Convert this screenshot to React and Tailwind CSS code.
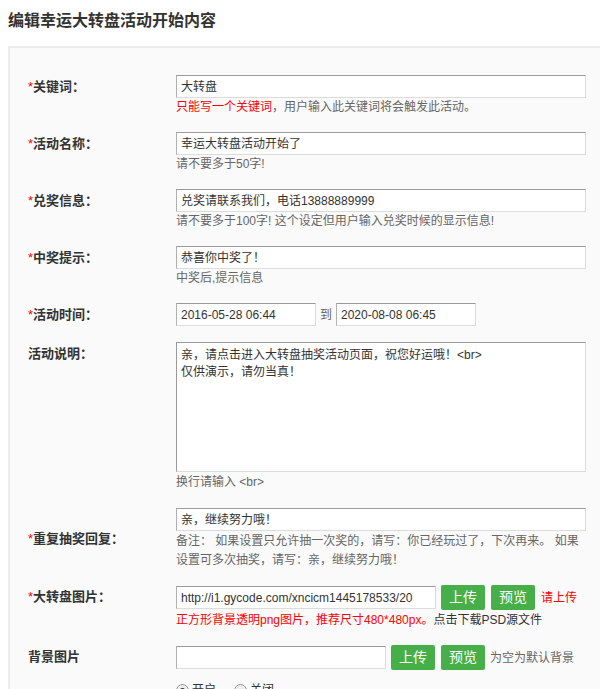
import React from "react";

const FONT = { fontFamily: '"Liberation Sans", "Noto Sans CJK SC", sans-serif' };

function Label({ star = true, children }) {
  return (
    <div className="w-[148px] shrink-0 h-[23px] flex items-center text-[13px] font-bold text-[#333]">
      {star && <span className="text-[#f00] font-normal">*</span>}
      {children}
    </div>
  );
}

const inputCls =
  "h-[23px] bg-white border border-[#dcdcdc] border-t-[#9a9a9a] border-l-[#b0b0b0] px-[4px] text-[12px] text-[#333] flex items-center whitespace-nowrap overflow-hidden";

function Help({ children, className = "" }) {
  return <div className={"text-[12px] leading-[18px] text-[#666] " + className}>{children}</div>;
}

function Btn({ children }) {
  return (
    <div className="w-[44px] h-[25px] bg-[#46af4a] rounded-[2px] text-white text-[14px] flex items-center justify-center">
      {children}
    </div>
  );
}

export default function App() {
  return (
    <div className="w-[600px] h-[689px] overflow-hidden bg-white" style={FONT}>
      <div className="pl-[8px] pt-[11px] h-[46px] text-[16px] font-bold text-[#333] leading-[20px]">
        编辑幸运大转盘活动开始内容
      </div>
      <div className="ml-[8px] w-[640px] h-[700px] bg-[#fafafa] border-t-2 border-l-2 border-[#ececec] pl-[18px] pt-[27px]">
        {/* 关键词 */}
        <div className="flex">
          <Label>关键词：</Label>
          <div>
            <div className={inputCls + " w-[410px]"}>大转盘</div>
            <Help>
              <span className="text-[#f00]">只能写一个关键词</span>，用户输入此关键词将会触发此活动。
            </Help>
          </div>
        </div>
        {/* 活动名称 */}
        <div className="flex mt-[16px]">
          <Label>活动名称：</Label>
          <div>
            <div className={inputCls + " w-[410px]"}>幸运大转盘活动开始了</div>
            <Help>请不要多于50字!</Help>
          </div>
        </div>
        {/* 兑奖信息 */}
        <div className="flex mt-[16px]">
          <Label>兑奖信息：</Label>
          <div>
            <div className={inputCls + " w-[410px]"}>兑奖请联系我们，电话13888889999</div>
            <Help>请不要多于100字! 这个设定但用户输入兑奖时候的显示信息!</Help>
          </div>
        </div>
        {/* 中奖提示 */}
        <div className="flex mt-[16px]">
          <Label>中奖提示：</Label>
          <div>
            <div className={inputCls + " w-[410px]"}>恭喜你中奖了！</div>
            <Help>中奖后,提示信息</Help>
          </div>
        </div>
        {/* 活动时间 */}
        <div className="flex mt-[16px]">
          <Label>活动时间：</Label>
          <div className="flex items-center">
            <div className={inputCls + " w-[140px]"}>2016-05-28 06:44</div>
            <span className="text-[12px] text-[#666] w-[20px] text-center">到</span>
            <div className={inputCls + " w-[140px]"}>2020-08-08 06:45</div>
          </div>
        </div>
        {/* 活动说明 */}
        <div className="flex mt-[16px]">
          <Label star={false}>活动说明：</Label>
          <div>
            <div className="w-[410px] h-[130px] bg-white border border-[#dcdcdc] border-t-[#9a9a9a] border-l-[#9a9a9a] px-[4px] pt-[4px] text-[12px] leading-[17px] text-[#333]">
              <div>亲，请点击进入大转盘抽奖活动页面，祝您好运哦！&lt;br&gt;</div>
              <div>仅供演示，请勿当真！</div>
            </div>
            <Help className="mt-[1px]">换行请输入 &lt;br&gt;</Help>
          </div>
        </div>
        {/* 重复抽奖回复 */}
        <div className="flex items-center mt-[17px]">
          <Label>重复抽奖回复：</Label>
          <div>
            <div className={inputCls + " w-[410px]"}>亲，继续努力哦！</div>
            <Help className="w-[410px] leading-[19px] pt-[1px]">
              备注： 如果设置只允许抽一次奖的，请写：你已经玩过了，下次再来。 如果设置可多次抽奖，请写：亲，继续努力哦！
            </Help>
          </div>
        </div>
        {/* 大转盘图片 */}
        <div className="flex mt-[15px]">
          <Label>大转盘图片：</Label>
          <div>
            <div className="flex items-center">
              <div className={inputCls + " w-[260px]"}>http://i1.gycode.com/xncicm1445178533/20</div>
              <div className="ml-[5px]"><Btn>上传</Btn></div>
              <div className="ml-[6px]"><Btn>预览</Btn></div>
              <span className="ml-[6px] text-[12px] text-[#f00]">请上传</span>
            </div>
            <Help className="mt-[1px] text-[#f00]">
              正方形背景透明png图片，推荐尺寸480*480px。<span className="text-[#333]">点击下载PSD源文件</span>
            </Help>
          </div>
        </div>
        {/* 背景图片 */}
        <div className="flex mt-[16px]">
          <Label star={false}>背景图片</Label>
          <div className="flex items-center">
            <div className={inputCls + " w-[210px]"}></div>
            <div className="ml-[5px]"><Btn>上传</Btn></div>
            <div className="ml-[6px]"><Btn>预览</Btn></div>
            <span className="ml-[5px] text-[12px] text-[#666]">为空为默认背景</span>
          </div>
        </div>
        {/* radios */}
        <div className="flex mt-[11px]">
          <div className="w-[148px] shrink-0" />
          <div className="flex items-center text-[12px] text-[#333]">
            <span className="w-[13px] h-[13px] rounded-full border border-[#999] bg-[#eee] inline-flex items-center justify-center">
              <span className="w-[5px] h-[5px] rounded-full bg-[#333]" />
            </span>
            <span className="ml-[3px]">开启</span>
            <span className="ml-[18px] w-[13px] h-[13px] rounded-full border border-[#999] bg-[#eee]" />
            <span className="ml-[3px]">关闭</span>
          </div>
        </div>
      </div>
    </div>
  );
}
